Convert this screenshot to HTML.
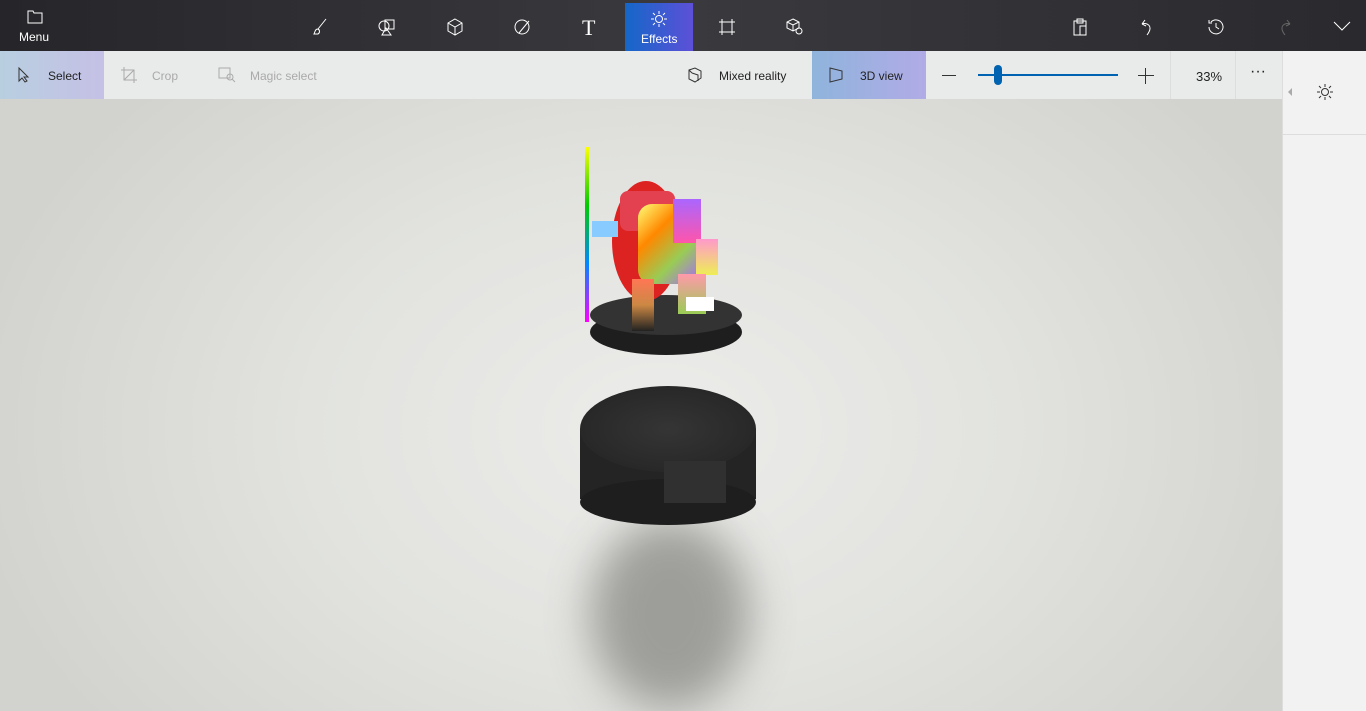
<!DOCTYPE html>
<html><head><style>
body{margin:0;width:1366px;height:711px;overflow:hidden;font-family:"Liberation Sans",sans-serif;position:relative;background:#dcdcd8}
.top{position:absolute;left:0;top:0;width:1366px;height:51px;background:linear-gradient(90deg,#26262a,#3a3a3e 50%,#2a2a2e)}
.bar{position:absolute;left:0;top:51px;width:1282px;height:48px;background:#e9eaea;font-size:12px;color:#222}
.canvas{position:absolute;left:0;top:99px;width:1282px;height:612px;overflow:hidden;background:radial-gradient(ellipse 700px 500px at 660px 330px,#ececea,#e2e3df 50%,#d2d2ce)}
.side{position:absolute;left:1282px;top:51px;width:84px;height:660px;background:#f2f2f3;border-left:1px solid #ddd}
.ic{position:absolute;color:#fff}
svg{position:absolute}
.t{position:absolute;top:18px}
</style></head><body>
<div class="top">
 <svg style="left:27px;top:10px" width="16" height="14" viewBox="0 0 16 14"><path d="M1 1h5l1 2h8v10H1z" fill="none" stroke="#fff"/></svg>
 <div class="ic" style="left:19px;top:30px;font-size:12px">Menu</div>
 <svg style="left:310px;top:18px" width="18" height="18" viewBox="0 0 18 18" fill="none" stroke="#fff"><path d="M16 1 8 11M8 11c-3 0-3 3-4 5h4c2-1 2-4 0-5"/></svg>
 <svg style="left:378px;top:18px" width="18" height="18" viewBox="0 0 18 18" fill="none" stroke="#fff"><circle cx="6" cy="8" r="5"/><rect x="7" y="2" width="9" height="9"/><path d="M8 10l-4 7h9z"/></svg>
 <svg style="left:446px;top:18px" width="18" height="18" viewBox="0 0 18 18" fill="none" stroke="#fff"><path d="M9 1l7 4v8l-7 4-7-4V5zM2 5l7 4 7-4M9 9v8"/></svg>
 <svg style="left:513px;top:18px" width="18" height="18" viewBox="0 0 18 18" fill="none" stroke="#fff"><circle cx="9" cy="9" r="7"/><path d="M16 3 6 15"/></svg>
 <div class="ic" style="left:582px;top:15px;font-size:22px;font-family:'Liberation Serif',serif">T</div>
 <div style="position:absolute;left:625px;top:3px;width:68px;height:48px;background:linear-gradient(90deg,#1467c8,#5d50d8)"></div>
 <svg style="left:650px;top:10px" width="18" height="18" viewBox="0 0 18 18" fill="none" stroke="#fff"><circle cx="9" cy="9" r="3.5"/><path d="M9 1v3M9 14v3M1 9h3M14 9h3M3 3l2 2M13 13l2 2M3 15l2-2M13 5l2-2"/></svg>
 <div class="ic" style="left:641px;top:32px;font-size:12px">Effects</div>
 <svg style="left:718px;top:18px" width="18" height="18" viewBox="0 0 18 18" fill="none" stroke="#fff"><rect x="4" y="4" width="10" height="10"/><path d="M4 1v3M14 1v3M4 14v3M14 14v3M1 4h3M1 14h3M14 4h3M14 14h3"/></svg>
 <svg style="left:786px;top:18px" width="18" height="18" viewBox="0 0 18 18" fill="none" stroke="#fff"><path d="M7 1l6 3v6l-6 3-6-3V4zM1 4l6 3 6-3M7 7v6"/><circle cx="13" cy="13" r="3"/></svg>
 <svg style="left:1071px;top:18px" width="18" height="18" viewBox="0 0 18 18" fill="none" stroke="#fff"><path d="M3 3h12v14H3zM6 1h6v4H6zM9 8h6v9H9z"/></svg>
 <svg style="left:1139px;top:18px" width="18" height="18" viewBox="0 0 18 18" fill="none" stroke="#fff"><path d="M3 6l3-4M3 6l4 2M3 6c5-2 12 2 5 11"/></svg>
 <svg style="left:1207px;top:18px" width="18" height="18" viewBox="0 0 18 18" fill="none" stroke="#fff"><path d="M2 9a7 7 0 1 0 2-5M2 2v3h3M9 5v4l3 2"/></svg>
 <svg style="left:1275px;top:18px" width="18" height="18" viewBox="0 0 18 18" fill="none" stroke="#666"><path d="M15 6l-3-4M15 6l-4 2M15 6c-5-2-12 2-5 11"/></svg>
 <svg style="left:1333px;top:20px" width="18" height="12" viewBox="0 0 18 12" fill="none" stroke="#fff"><path d="M1 2l8 8 8-8"/></svg>
</div>
<div class="bar">
 <div style="position:absolute;left:0;top:0;width:104px;height:48px;background:linear-gradient(90deg,#b8cfe0,#c5c0e6)"></div>
 <svg style="left:17px;top:16px" width="14" height="16" viewBox="0 0 14 16" fill="none" stroke="#333"><path d="M2 1v13l3-3 3 4 2-1-3-4h4z"/></svg>
 <div class="t" style="left:48px">Select</div>
 <svg style="left:120px;top:15px" width="18" height="18" viewBox="0 0 18 18" fill="none" stroke="#aaa"><path d="M4 1v13h13M1 4h13v13M4 14 14 4"/></svg>
 <div class="t" style="left:152px;color:#aaa">Crop</div>
 <svg style="left:218px;top:16px" width="18" height="16" viewBox="0 0 18 16" fill="none" stroke="#aaa"><rect x="1" y="1" width="11" height="10"/><circle cx="12" cy="10" r="3"/><path d="M14 12l3 3"/></svg>
 <div class="t" style="left:250px;color:#aaa">Magic select</div>
 <svg style="left:687px;top:16px" width="16" height="16" viewBox="0 0 16 16" fill="none" stroke="#333"><path d="M2 3l6-2 6 3v7l-6 4-6-3zM5 6l6 2v6M2 3l3 3"/></svg>
 <div class="t" style="left:719px">Mixed reality</div>
 <div style="position:absolute;left:812px;top:0;width:114px;height:48px;background:linear-gradient(90deg,#8fb4dc,#b1abe6)"></div>
 <svg style="left:828px;top:16px" width="16" height="16" viewBox="0 0 16 16" fill="none" stroke="#333"><path d="M2 1l12 3v8L2 15z"/></svg>
 <div class="t" style="left:860px">3D view</div>
 <div style="position:absolute;left:942px;top:24px;width:14px;height:1px;background:#333"></div>
 <div style="position:absolute;left:978px;top:23px;width:140px;height:2px;background:#0063b1"></div>
 <div style="position:absolute;left:994px;top:14px;width:8px;height:20px;border-radius:4px;background:#0063b1"></div>
 <div style="position:absolute;left:1138px;top:24px;width:16px;height:1px;background:#333"></div>
 <div style="position:absolute;left:1145px;top:17px;width:1px;height:16px;background:#333"></div>
 <div style="position:absolute;left:1170px;top:0;width:64px;height:48px;border-left:1px solid #ddd;border-right:1px solid #ddd"></div>
 <div class="t" style="left:1196px;font-size:13px">33%</div>
 <div class="t" style="left:1250px;top:12px;font-size:16px">···</div>
</div>
<div class="canvas">
 <div style="position:absolute;left:590px;top:420px;width:160px;height:190px;border-radius:50%;background:#8c8c88;filter:blur(22px);opacity:.8"></div>
 <div style="position:absolute;left:580px;top:330px;width:176px;height:70px;background:#242424"></div>
 <div style="position:absolute;left:580px;top:380px;width:176px;height:46px;border-radius:50%;background:#1e1e1e"></div>
 <div style="position:absolute;left:580px;top:287px;width:176px;height:86px;border-radius:50%;background:radial-gradient(ellipse,#353535,#282828 70%,#1a1a1a)"></div>
 <div style="position:absolute;left:664px;top:362px;width:62px;height:42px;background:#303030"></div>
 <div style="position:absolute;left:590px;top:210px;width:152px;height:46px;border-radius:50%;background:#1e1e1e"></div>
 <div style="position:absolute;left:590px;top:196px;width:152px;height:40px;border-radius:50%;background:#333"></div>
 <div style="position:absolute;left:585px;top:48px;width:4px;height:175px;background:linear-gradient(#ff0,#0c0,#08f,#f0f)"></div>
 <div style="position:absolute;left:612px;top:82px;width:68px;height:120px;border-radius:50%;background:#d22"></div>
 <div style="position:absolute;left:620px;top:92px;width:55px;height:40px;background:#e34050;border-radius:8px"></div>
 <div style="position:absolute;left:638px;top:105px;width:60px;height:80px;border-radius:14px;background:linear-gradient(135deg,#ff7,#f80,#9c5,#a6f)"></div>
 <div style="position:absolute;left:673px;top:100px;width:28px;height:44px;background:linear-gradient(#a6f,#f5a)"></div>
 <div style="position:absolute;left:696px;top:140px;width:22px;height:36px;background:linear-gradient(#f9c,#ee5)"></div>
 <div style="position:absolute;left:592px;top:122px;width:26px;height:16px;background:#8cf"></div>
 <div style="position:absolute;left:632px;top:180px;width:22px;height:52px;background:linear-gradient(#f75,#c84,#222)"></div>
 <div style="position:absolute;left:678px;top:175px;width:28px;height:40px;background:linear-gradient(#f9a,#9c5)"></div>
 <div style="position:absolute;left:686px;top:198px;width:28px;height:14px;background:#fff"></div>
</div>
<div class="side">
 <svg style="left:4px;top:36px" width="6" height="10" viewBox="0 0 6 10"><path d="M5 1v8L1 5z" fill="#aaa"/></svg>
 <svg style="left:33px;top:32px" width="18" height="18" viewBox="0 0 18 18" fill="none" stroke="#333"><circle cx="9" cy="9" r="3.5"/><path d="M9 1v3M9 14v3M1 9h3M14 9h3M3 3l2 2M13 13l2 2M3 15l2-2M13 5l2-2"/></svg>
 <div style="position:absolute;left:0;top:83px;width:84px;height:1px;background:#ddd"></div>
</div>
</body></html>
